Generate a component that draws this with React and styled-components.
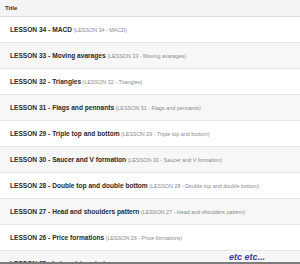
import React from 'react';
import styled, { createGlobalStyle } from 'styled-components';

const GlobalStyle = createGlobalStyle`
  html, body {
    margin: 0;
    padding: 0;
    background: #fff;
  }
  body {
    font-family: "Liberation Sans", Arial, sans-serif;
  }
`;

const lessons = [
  { title: 'LESSON 34 - MACD', sub: 'LESSON 34 - MACD' },
  { title: 'LESSON 33 - Moving avarages', sub: 'LESSON 33 - Moving avarages' },
  { title: 'LESSON 32 - Triangles', sub: 'LESSON 32 - Triangles' },
  { title: 'LESSON 31 - Flags and pennants', sub: 'LESSON 31 - Flags and pennants' },
  { title: 'LESSON 29 - Triple top and bottom', sub: 'LESSON 29 - Triple top and bottom' },
  { title: 'LESSON 30 - Saucer and V formation', sub: 'LESSON 30 - Saucer and V formation' },
  { title: 'LESSON 28 - Double top and double bottom', sub: 'LESSON 28 - Double top and double bottom' },
  { title: 'LESSON 27 - Head and shoulders pattern', sub: 'LESSON 27 - Head and shoulders pattern' },
  { title: 'LESSON 26 - Price formations', sub: 'LESSON 26 - Price formations' },
  { title: 'LESSON 25 - Late entries strategy', sub: 'Strategia spóźnionych wejść' },
];

const App = () => {
  return (
    <>
      <GlobalStyle />
      <Frame>
        <Table>
          <HeaderRow>Title</HeaderRow>
          {lessons.map((l, i) => (
            <Row key={l.title} $striped={i % 2 === 1}>
              <Name>{l.title}</Name>
              <Alias>({l.sub})</Alias>
            </Row>
          ))}
        </Table>
        <Etc>etc etc...</Etc>
      </Frame>
    </>
  );
};

export default App;

const Frame = styled.div`
  position: relative;
  width: 300px;
  height: 264px;
  overflow: hidden;
  box-sizing: border-box;
  border-bottom: 2px solid #7c7c7c;
`;

const Table = styled.div`
  display: flex;
  flex-direction: column;
`;

const HeaderRow = styled.div`
  height: 16px;
  display: flex;
  align-items: center;
  padding-left: 5px;
  background: #f4f4f4;
  border-bottom: 1px solid #dcdcdc;
  font-size: 6px;
  font-weight: bold;
  color: #333;
`;

const Row = styled.div`
  flex: 0 0 auto;
  height: 25px;
  display: flex;
  align-items: center;
  gap: 1.5px;
  padding-left: 10px;
  white-space: nowrap;
  background: ${(p) => (p.$striped ? '#f7f7f7' : '#fff')};
  border-bottom: 1px solid #e6e6e6;
`;

const Name = styled.span`
  font-size: 6.6px;
  font-weight: bold;
  color: #2a2a2a;
`;

const Alias = styled.span`
  font-size: 5.4px;
  color: #8a8a8a;
`;

const Etc = styled.div`
  position: absolute;
  left: 229px;
  top: 252px;
  font-size: 9px;
  font-weight: bold;
  font-style: italic;
  color: #3a3f9a;
`;
